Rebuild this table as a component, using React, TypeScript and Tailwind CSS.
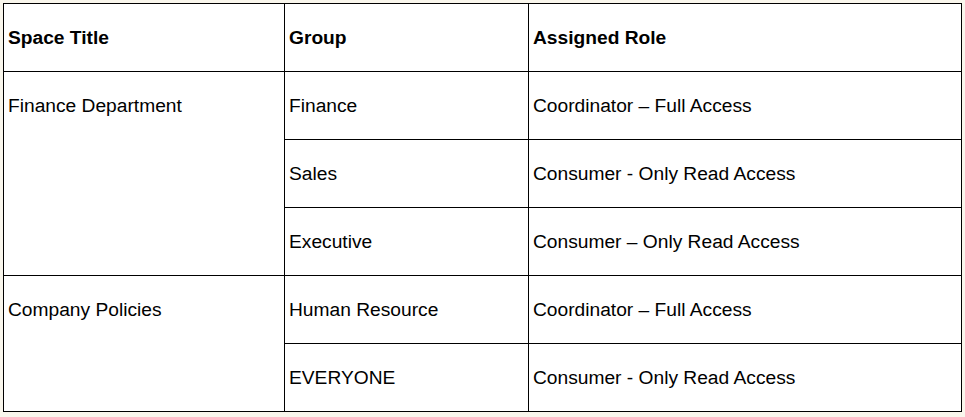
import React from "react";

interface Assignment {
  group: string;
  role: string;
}

interface Space {
  title: string;
  rows: Assignment[];
}

const spaces: Space[] = [
  {
    title: "Finance Department",
    rows: [
      { group: "Finance", role: "Coordinator – Full Access" },
      { group: "Sales", role: "Consumer - Only Read Access" },
      { group: "Executive", role: "Consumer – Only Read Access" },
    ],
  },
  {
    title: "Company Policies",
    rows: [
      { group: "Human Resource", role: "Coordinator – Full Access" },
      { group: "EVERYONE", role: "Consumer - Only Read Access" },
    ],
  },
];

const cell = "flex items-center px-[4px] pt-[2px] h-[68px] border-r border-b border-black";

export default function App() {
  return (
    <div
      className="min-h-screen bg-[#f9f6ec] pt-[3px] pl-[3px] text-[19.2px] text-black"
      style={{ fontFamily: '"Liberation Sans", Arial, sans-serif' }}
    >
      <div className="grid grid-cols-[281px_244px_433px] w-[959px] border-l border-t border-black bg-white">
        <div className={`${cell} font-bold`}>Space Title</div>
        <div className={`${cell} font-bold`}>Group</div>
        <div className={`${cell} font-bold`}>Assigned Role</div>

        {spaces.map((space) => (
          <React.Fragment key={space.title}>
            <div
              className="border-r border-b border-black px-[4px]"
              style={{ gridRow: `span ${space.rows.length}` }}
            >
              <div className="h-[67px] pt-[2px] flex items-center">{space.title}</div>
            </div>
            {space.rows.map((row, i) => (
              <React.Fragment key={row.group}>
                <div
                  className={cell}
                  style={i > 0 ? { gridColumn: 2 } : undefined}
                >
                  {row.group}
                </div>
                <div className={cell}>{row.role}</div>
              </React.Fragment>
            ))}
          </React.Fragment>
        ))}
      </div>
    </div>
  );
}
